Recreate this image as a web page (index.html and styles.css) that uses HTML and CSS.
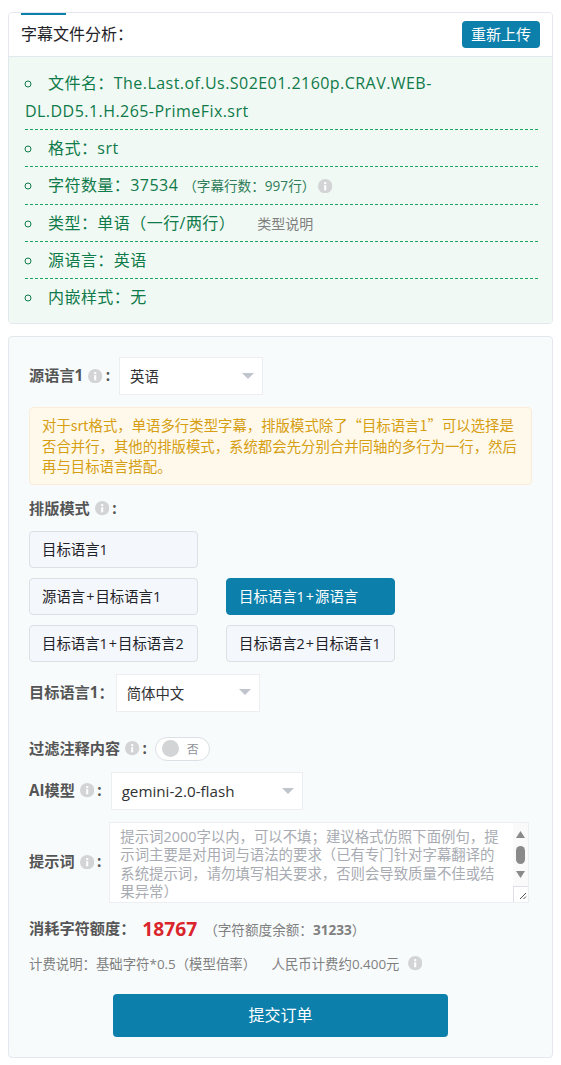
FILE: index.html
```html
<!DOCTYPE html>
<html lang="zh-CN">
<head>
    <meta charset="UTF-8">
    <meta name="viewport" content="width=device-width, initial-scale=1.0">
    <title>字幕翻译</title>
    <link rel="stylesheet" href="styles.css">
</head>
<body>
    <svg class="icon-defs" width="0" height="0">
        <symbol id="info" viewBox="0 0 14 14">
            <circle cx="7" cy="7" r="7" fill="#d3d4d6"/>
            <rect x="6" y="6" width="2" height="5" fill="#fff"/>
            <rect x="6" y="3" width="2" height="2" fill="#fff"/>
        </symbol>
    </svg>

    <section class="card analysis">
        <span class="tab-bar"></span>
        <div class="analysis-head">
            <span class="analysis-title">字幕文件分析：</span>
            <button class="btn-upload" type="button">重新上传</button>
        </div>
        <div class="analysis-body">
            <ul class="file-info">
                <li>文件名：The.Last.of.Us.S02E01.2160p.CRAV.WEB-DL.DD5.1.H.265-PrimeFix.srt</li>
                <li>格式：srt</li>
                <li class="count-row">字符数量：37534<small class="line-count">（字幕行数：997行）</small><svg class="info info-row"><use href="#info"/></svg></li>
                <li>类型：单语（一行/两行）<small class="type-link">类型说明</small></li>
                <li>源语言：英语</li>
                <li>内嵌样式：无</li>
            </ul>
        </div>
    </section>

    <section class="card order">
        <div class="row">
            <label class="label">源语言1<svg class="info"><use href="#info"/></svg>:</label>
            <div class="select select-lang"><span>英语</span><i class="caret"></i></div>
        </div>

        <div class="alert">对于srt格式，单语多行类型字幕，排版模式除了“目标语言1”可以选择是否合并行，其他的排版模式，系统都会先分别合并同轴的多行为一行，然后再与目标语言搭配。</div>

        <div class="label label-block">排版模式<svg class="info"><use href="#info"/></svg>:</div>
        <div class="modes">
            <button class="mode" type="button">目标语言1</button>
            <span></span>
            <button class="mode" type="button">源语言<span class="plus">+</span>目标语言1</button>
            <button class="mode active" type="button">目标语言1<span class="plus">+</span>源语言</button>
            <button class="mode" type="button">目标语言1<span class="plus">+</span>目标语言2</button>
            <button class="mode" type="button">目标语言2<span class="plus">+</span>目标语言1</button>
        </div>

        <div class="row row-target">
            <label class="label">目标语言1：</label>
            <div class="select select-lang"><span>简体中文</span><i class="caret"></i></div>
        </div>

        <div class="row row-filter">
            <label class="label">过滤注释内容<svg class="info"><use href="#info"/></svg>:</label>
            <div class="switch"><i class="knob"></i><span>否</span></div>
        </div>

        <div class="row row-model">
            <label class="label">AI模型<svg class="info"><use href="#info"/></svg>:</label>
            <div class="select select-model"><span>gemini-2.0-flash</span><i class="caret"></i></div>
        </div>

        <div class="row row-prompt">
            <label class="label">提示词<svg class="info"><use href="#info"/></svg>:</label>
            <div class="prompt">
                <textarea class="prompt-input" placeholder="提示词2000字以内，可以不填；建议格式仿照下面例句，提示词主要是对用词与语法的要求（已有专门针对字幕翻译的系统提示词，请勿填写相关要求，否则会导致质量不佳或结果异常）"></textarea>
                <svg class="scrollbar" viewBox="0 0 15 79" width="15" height="79">
                    <rect width="15" height="79" fill="#fafafa"/>
                    <path d="M7.5 8 L12 15 H3 Z" fill="#8a8a8a"/>
                    <rect x="3" y="23" width="9" height="18" rx="4.5" fill="#8a8a8a"/>
                    <path d="M3 48 H12 L7.5 55 Z" fill="#8a8a8a"/>
                    <rect x="0.5" y="63.5" width="15" height="16" fill="#fff" stroke="#dcdfe6"/>
                    <path d="M7 76 L13 70 M10.5 76 L13 73.5" stroke="#555" stroke-width="1" fill="none"/>
                </svg>
            </div>
        </div>

        <div class="cost">
            <span class="label">消耗字符额度：</span>
            <strong class="cost-num">18767</strong>
            <span class="cost-left">（字符额度余额：<b>31233</b>）</span>
        </div>

        <div class="billing">
            <span>计费说明：基础字符*0.5（模型倍率）</span>
            <span>人民币计费约0.400元</span>
            <svg class="info"><use href="#info"/></svg>
        </div>

        <button class="btn-submit" type="button">提交订单</button>
    </section>
</body>
</html>
```

FILE: styles.css
```css
html, body {
    margin: 0;
    padding: 0;
}

body {
    width: 561px;
    height: 1065px;
    padding: 12px 8px 0;
    box-sizing: border-box;
    background-color: #ffffff;
    font-family: "Open Sans", "Noto Sans CJK SC", sans-serif;
    font-size: 14.4px;
    color: #606266;
    overflow: hidden;
}

.icon-defs {
    position: absolute;
}

.card {
    border: 1px solid #e4e7ed;
    border-radius: 4px;
    box-sizing: border-box;
}

.info {
    width: 14.4px;
    height: 14.4px;
    margin: 0 3px 0 5px;
    vertical-align: -2px;
}

/* file analysis */
.analysis {
    position: relative;
    height: 312px;
    overflow: hidden;
}

.tab-bar {
    position: absolute;
    top: 0;
    left: 12px;
    width: 45px;
    height: 2px;
    background-color: #0c7fab;
}

.analysis-head {
    height: 43px;
    padding: 0 12px;
    display: flex;
    justify-content: space-between;
    align-items: center;
    border-bottom: 1px solid #e4e7ed;
    background-color: #ffffff;
}

.analysis-title {
    margin-top: -4px;
    font-size: 16px;
    color: #1f2329;
}

.btn-upload {
    width: 78px;
    height: 27px;
    padding: 0 0 2px;
    border: none;
    border-radius: 4px;
    background-color: #0c7fab;
    color: #ffffff;
    font-family: inherit;
    font-size: 15px;
}

.analysis-body {
    height: 266px;
    padding: 8px 14px 0 16px;
    box-sizing: border-box;
    background-color: #f0f9f3;
}

.file-info {
    margin: 0;
    padding: 0;
    list-style: circle inside;
    color: #0f7a4a;
    font-size: 16px;
    line-height: 28px;
    letter-spacing: 0.45px;
}

.file-info li {
    padding: 4px 0;
    border-bottom: 1px dashed #19a55d;
}

.file-info li:last-child {
    border-bottom: none;
}

.file-info .count-row {
    padding-bottom: 5px;
}

.file-info small {
    line-height: 1;
    letter-spacing: 0;
}

.line-count {
    margin-left: 5px;
    font-size: 13.6px;
    color: #2f7d5a;
}

.type-link {
    margin-left: 22px;
    font-size: 14px;
    color: #808080;
}

.info-row {
    margin-left: 3px;
}

/* order form */
.order {
    height: 722px;
    margin-top: 12px;
    padding: 20px 20px 0;
    background-color: #f8fbfc;
}

.row {
    display: flex;
    align-items: center;
}

.label {
    padding-bottom: 2px;
    font-weight: 700;
    font-size: 15.2px;
    line-height: 20px;
    color: #555555;
}

.row .label {
    margin-right: 9px;
}

.select {
    height: 38px;
    padding: 0 8px 1px 10px;
    display: flex;
    justify-content: space-between;
    align-items: center;
    box-sizing: border-box;
    border: 1px solid #eceef2;
    background-color: #ffffff;
    color: #303133;
    font-size: 14.4px;
}

.select-lang {
    width: 144px;
}

.select-model {
    width: 192px;
    padding-bottom: 0;
    font-size: 15.2px;
}

.caret {
    width: 0;
    height: 0;
    border-left: 6px solid transparent;
    border-right: 6px solid transparent;
    border-top: 6px solid #c0c4cc;
}

.alert {
    margin-top: 12px;
    padding: 7px 12px;
    border: 1px solid #faecd8;
    border-radius: 4px;
    background-color: #fff9eb;
    color: #d69e12;
    font-family: "Noto Sans CJK SC", sans-serif;
    font-size: 14.4px;
    line-height: 20.6px;
}

.label-block {
    height: 20px;
    padding-bottom: 0;
    margin-top: 13px;
}

.modes {
    margin-top: 13px;
    display: grid;
    grid-template-columns: 169px 169px;
    grid-auto-rows: 37px;
    gap: 10px 28px;
}

.mode {
    padding: 0 12px 2px;
    border: 1px solid #dcdfe6;
    border-radius: 4px;
    background-color: #f4f7fb;
    color: #1f2329;
    font-family: inherit;
    font-size: 14.4px;
    text-align: left;
    white-space: nowrap;
}

.mode.active {
    border-color: #0c7fab;
    background-color: #0c7fab;
    color: #ffffff;
}

.plus {
    margin: 0 1px;
}

.row-target {
    margin-top: 12px;
}

.row-target .label {
    margin-right: 2px;
}

.row-filter {
    margin-top: 25px;
}

.row-filter .label {
    margin-right: 8px;
}

.switch {
    width: 55px;
    height: 24px;
    padding: 0 6px;
    display: flex;
    align-items: center;
    justify-content: space-between;
    box-sizing: border-box;
    border: 1px solid #dcdfe6;
    border-radius: 12px;
    background-color: #ffffff;
    font-size: 12px;
    color: #909399;
}

.knob {
    width: 17px;
    height: 17px;
    border-radius: 50%;
    background-color: #d3d4d6;
}

.switch span {
    margin-right: 4px;
}

.row-model {
    margin-top: 11px;
}

.row-prompt {
    margin-top: 12px;
}

.row-prompt .label {
    margin-right: 8px;
}

.prompt {
    position: relative;
    width: 420px;
    height: 81px;
}

.prompt-input {
    display: block;
    width: 100%;
    height: 100%;
    padding: 5px 21px 0 10px;
    box-sizing: border-box;
    border: 1px solid #eceef2;
    background-color: #ffffff;
    font-family: inherit;
    font-size: 14.4px;
    line-height: 18.4px;
    resize: none;
    outline: none;
}

.prompt-input::placeholder {
    color: #a8abb2;
}

.scrollbar {
    position: absolute;
    top: 1px;
    right: 1px;
}

.cost {
    height: 22px;
    margin-top: 15px;
    display: flex;
    align-items: center;
}

.cost-num {
    margin-left: 7px;
    font-size: 19.2px;
    color: #d9252b;
}

.cost-left {
    margin-left: 7px;
    font-size: 13.6px;
    color: #808080;
}

.billing {
    margin-top: 14px;
    font-size: 13.4px;
    line-height: 20px;
    color: #808080;
}

.billing span + span {
    margin-left: 12px;
}

.btn-submit {
    display: block;
    width: 335px;
    height: 43px;
    margin: 20px 0 0 84px;
    padding: 0 0 2px;
    border: none;
    border-radius: 4px;
    background-color: #0c7fab;
    color: #ffffff;
    font-family: inherit;
    font-size: 16px;
}
```
